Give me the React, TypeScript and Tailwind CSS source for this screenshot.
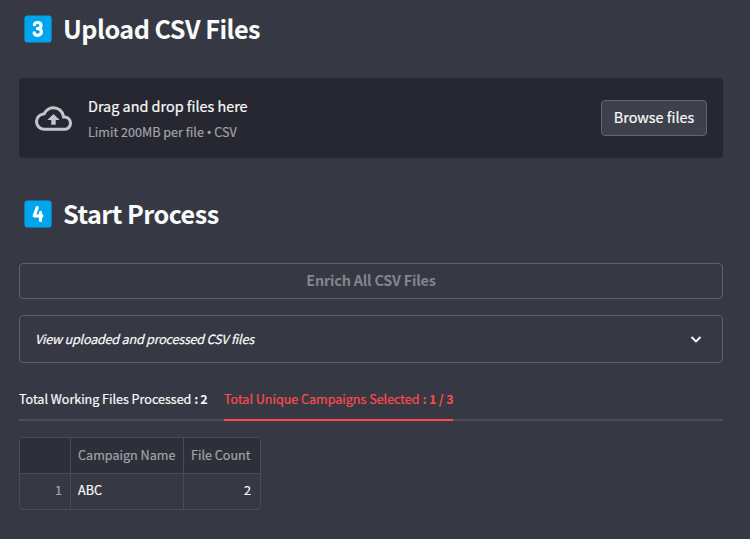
import React from "react";

function Keycap({ digit }: { digit: 3 | 4 }) {
  return (
    <svg width="28" height="28" viewBox="0 0 28 28" className="shrink-0" aria-label={`${digit}`}>
      <rect x="0.4" y="0.4" width="27.2" height="27.2" rx="3.4" fill="#00a6ed" />
      <g fill="none" stroke="#fff" strokeWidth="3.2" strokeLinecap="round" strokeLinejoin="round">
        {digit === 3 ? (
          <path d="M10.4 9.6C10.8 8.2 12.1 7.5 13.7 7.500C15.700 7.500 17 8.700 17 10.400C17 12.300 15.600 13.500 13.400 13.500C15.800 13.500 17.400 14.800 17.400 16.800C17.400 18.900 15.800 20.300 13.700 20.300C12 20.300 10.700 19.500 10.200 17.900" />
        ) : (
          <path d="M13.200 7.600L10.200 15.800H17.900M16.500 12.400V20.400" />
        )}
      </g>
    </svg>
  );
}

function Heading({ digit, children }: { digit: 3 | 4; children: React.ReactNode }) {
  return (
    <h2 className="flex h-[34px] items-center gap-[11px] pl-[5px] text-[25.2px] leading-[34px] font-bold tracking-[-0.53px] text-[#fafafa]">
      <Keycap digit={digit} />
      <span className="pb-0.5 whitespace-nowrap">{children}</span>
    </h2>
  );
}

export default function App() {
  return (
    <main className="h-[539px] w-[750px] overflow-hidden bg-[#363943] pt-3 pr-[27px] pl-[19px] font-['Noto_Sans_CJK_SC',sans-serif] text-[#fafafa]">
      <Heading digit={3}>Upload CSV Files</Heading>
      <section className="mt-8 flex h-20 items-center rounded bg-[#262730] px-4">
        <svg width="37" height="37" viewBox="0 0 24 24" fill="#c3c5ce" className="shrink-0">
          <path d="M19.350 10.040A7.490 7.490 0 0 0 12 4C9.110 4 6.600 5.640 5.350 8.040A5.994 5.994 0 0 0 0 14c0 3.310 2.690 6 6 6h13c2.760 0 5-2.240 5-5 0-2.640-2.050-4.780-4.650-4.960zM19 18H6c-2.210 0-4-1.790-4-4 0-2.050 1.530-3.760 3.560-3.970l1.070-.110.500-.950A5.469 5.469 0 0 1 12 6c2.620 0 4.880 1.860 5.390 4.430l.300 1.500 1.530.110A2.980 2.980 0 0 1 22 15c0 1.650-1.350 3-3 3zM8 13h2.550v3h2.900v-3H16l-4-4z" />
        </svg>
        <div className="ml-4 flex grow flex-col gap-1 whitespace-nowrap [-webkit-text-stroke:0.2px]">
          <span className="text-[14.4px] leading-6">Drag and drop files here</span>
          <span className="text-[12.6px] leading-5 text-[#a2a3a8]">
            Limit 200MB per file <span className="font-['Noto_Sans',sans-serif]">•</span> CSV
          </span>
        </div>
        <button className="h-9 w-[106px] rounded border border-[#62656e] bg-[#3d414b] pb-0.5 text-[14.4px] leading-6 whitespace-nowrap [-webkit-text-stroke:0.2px]">
          Browse files
        </button>
      </section>
      <div className="mt-[39px]">
        <Heading digit={4}>Start Process</Heading>
      </div>
      <button className="mt-8 flex h-9 w-full items-center justify-center rounded border border-[#5d6069] pb-0.5 text-[14.4px] leading-6 font-bold tracking-[-0.2px] text-[#83858b]">
        Enrich All CSV Files
      </button>
      <div className="mt-4 flex h-12 items-center justify-between rounded border border-[#5d6069] pr-4 pl-[15px]">
        <span className="text-[12.6px] leading-5 tracking-[-0.22px] whitespace-nowrap italic [-webkit-text-stroke:0.2px]">View uploaded and processed CSV files</span>
        <svg width="20" height="20" viewBox="0 0 20 20" fill="none" stroke="#fafafa" strokeWidth="1.900">
          <path d="M5.500 8L10 12.500L14.500 8" />
        </svg>
      </div>
      <nav className="mt-4 flex h-[42px] gap-4 text-[12.6px] leading-10 whitespace-nowrap shadow-[inset_0_-2px_0_#4b4d57] [-webkit-text-stroke:0.2px]">
        <span className="w-[189px] tracking-[-0.03px]">Total Working Files Processed <b className="tracking-[-0.4px] [-webkit-text-stroke:0]">: 2</b></span>
        <span className="w-[229px] border-b-2 border-[#ff4b4b] tracking-[-0.03px] text-[#ff4b4b]">Total Unique Campaigns Selected <b className="tracking-[-0.2px] [-webkit-text-stroke:0]">: 1 / 3</b></span>
      </nav>
      <div className="mt-4 grid h-[73px] w-[242px] grid-cols-[51px_113px_76px] grid-rows-[36px_35px] overflow-hidden rounded border border-[#494b56] text-[12.6px] leading-[34px] whitespace-nowrap [-webkit-text-stroke:0.2px]">
        <div className="border-r border-b border-[#494b56] bg-[#2e3039]" />
        <div className="border-r border-b border-[#494b56] bg-[#2e3039] px-[7px] text-[#a2a3a8]">Campaign Name</div>
        <div className="border-b border-[#494b56] bg-[#2e3039] px-[7px] text-[#a2a3a8]">File Count</div>
        <div className="border-r border-[#494b56] pr-2 text-right leading-8 text-[#a2a3a8]">1</div>
        <div className="border-r border-[#494b56] px-[7px] leading-8">ABC</div>
        <div className="pr-[9px] text-right leading-8">2</div>
      </div>
    </main>
  );
}
